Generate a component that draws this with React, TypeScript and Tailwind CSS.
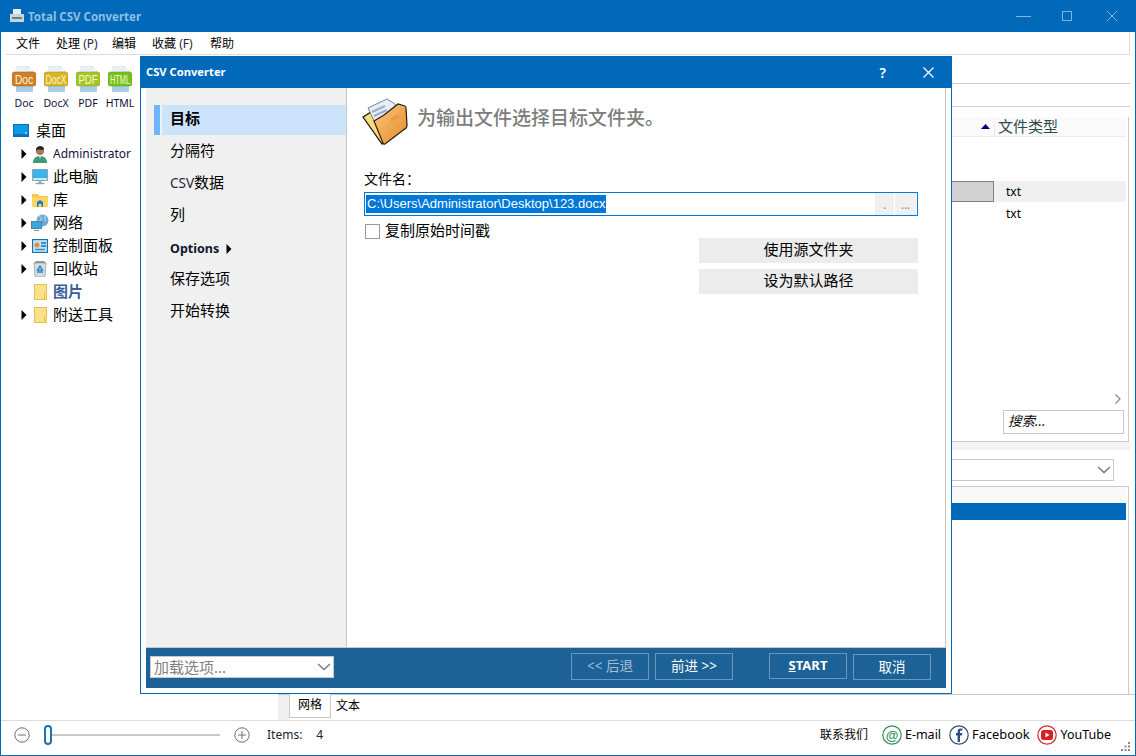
const docIcons = [
  { label: "Doc", band: "#cf7f26", edge: "#a9601a", text: "#fff3dc", sx: 0.85 },
  { label: "DocX", band: "#d8b326", edge: "#b08f12", text: "#fff6c8", sx: 0.72 },
  { label: "PDF", band: "#a5c526", edge: "#83a012", text: "#f5fbd0", sx: 0.8 },
  { label: "HTML", band: "#79c01c", edge: "#5c9c0c", text: "#ecfbd0", sx: 0.62 },
];

function DocIcon({ label, band, edge, text, sx }: { label: string; band: string; edge: string; text: string; sx: number }) {
  return (
    <svg width="24" height="26" viewBox="0 0 24 26">
      <path d="M4 0.5h12l5 5V25a1 1 0 0 1-1 1H5a1 1 0 0 1-1-1z" fill="#a9cde6" />
      <path d="M4 0.5h12l5 5V8H4z" fill="#e9eff4" />
      <path d="M16 0.5l5 5h-5z" fill="#fff" stroke="#c5ccd2" strokeWidth="0.5" />
      <rect x="0" y="6" width="24" height="14" rx="2.5" fill={band} stroke={edge} strokeWidth="0.5" />
      <text transform={`translate(12 17.5) scale(${sx} 1)`} textAnchor="middle" fontSize="12" fill={text} fontFamily="Liberation Sans, sans-serif">
        {label}
      </text>
    </svg>
  );
}

function Caret({ hidden }: { hidden?: boolean }) {
  return (
    <svg width="6" height="10" viewBox="0 0 6 10" className={hidden ? "invisible" : ""}>
      <path d="M0.5 0l5 5-5 5z" fill="#000" />
    </svg>
  );
}

function TreeIcon({ kind }: { kind: string }) {
  if (kind === "desk")
    return (
      <svg width="16" height="13" viewBox="0 0 16 13">
        <rect x="0.5" y="0.5" width="15" height="12" fill="#0c9be8" stroke="#0a6fb8" />
        <path d="M1 11h14" stroke="#0a4f90" />
        <path d="M12 9h2" stroke="#dff" />
      </svg>
    );
  if (kind === "user")
    return (
      <svg width="16" height="18" viewBox="0 0 16 18">
        <path d="M1 18c0-5 3-7 7-7s7 2 7 7z" fill="#3f9a76" />
        <circle cx="8" cy="6" r="4" fill="#a87a58" />
        <path d="M4 6c-1-5 7-7 8-2 0 1-1 1-2 1-2 0-4-1-5 0z" fill="#2d2620" />
        <path d="M7 11h2l-1 3z" fill="#eef" />
      </svg>
    );
  if (kind === "pc")
    return (
      <svg width="16" height="16" viewBox="0 0 16 16">
        <rect x="0.5" y="0.5" width="15" height="11" fill="#38b4ee" stroke="#8fa4b2" />
        <path d="M1 9h14v2H1z" fill="#cfe6f3" />
        <path d="M6.5 12h3v2h-3z" fill="#9fb4c2" />
        <path d="M3.5 14.5h9" stroke="#8fa4b2" strokeWidth="1.4" />
      </svg>
    );
  if (kind === "lib")
    return (
      <svg width="16" height="14" viewBox="0 0 16 14">
        <path d="M0 1h6l1.5 2H16v11H0z" fill="#f6c544" />
        <path d="M0 4h16v10H0z" fill="#fbd465" />
        <path d="M5 14V9l3-2 3 2v5H9.5v-3h-3v3z" fill="#1f7cc4" />
      </svg>
    );
  if (kind === "net")
    return (
      <svg width="18" height="17" viewBox="0 0 18 17">
        <circle cx="11.5" cy="6.5" r="6" fill="#6fa8d6" />
        <path d="M8 2c2 1 3 2 2 4s-3 1-4 1M14 2c0 2-1 3 1 5" stroke="#cfe3f2" fill="none" />
        <rect x="0.5" y="7.5" width="10" height="7" fill="#37a6e4" stroke="#5a7e98" />
        <path d="M3 16.5h5" stroke="#7f95a5" strokeWidth="1.2" />
      </svg>
    );
  if (kind === "panel")
    return (
      <svg width="16" height="14" viewBox="0 0 16 14">
        <rect x="0.5" y="0.5" width="15" height="13" fill="#bfe2f5" stroke="#1a6fb0" strokeWidth="1.2" />
        <circle cx="5" cy="6" r="2.5" fill="#e88f2a" />
        <path d="M9 4h5M9 7h5" stroke="#1a6fb0" strokeWidth="1.4" />
        <path d="M3 10.5h10" stroke="#2a8fc8" strokeWidth="1.4" />
      </svg>
    );
  if (kind === "bin")
    return (
      <svg width="14" height="17" viewBox="0 0 14 17">
        <path d="M1 3h12l-1 14H2z" fill="#d6dde2" stroke="#8c979f" strokeWidth="0.7" />
        <path d="M3 1h8l2 2H1z" fill="#8c979f" />
        <path d="M7 6l2.5 4h-5zM4 12h6" stroke="#2f86cc" strokeWidth="1.4" fill="none" />
      </svg>
    );
  return (
    <svg width="13" height="16" viewBox="0 0 13 16">
      <rect x="0.5" y="0.5" width="12" height="15" fill="#fde08e" stroke="#e5c14d" />
      <path d="M10.5 9v6" stroke="#e5c14d" />
    </svg>
  );
}

const tree = [
  { icon: "user", label: "Administrator", text: "text-[12px] text-[#14143c]" },
  { icon: "pc", label: "此电脑" },
  { icon: "lib", label: "库" },
  { icon: "net", label: "网络" },
  { icon: "panel", label: "控制面板" },
  { icon: "bin", label: "回收站" },
  { icon: "folder", label: "图片", noCaret: true, text: "text-[15px] font-bold text-[#3c5f9c]" },
  { icon: "folder", label: "附送工具" },
];

const navItems = ["目标", "分隔符", "CSV数据", "列", "Options", "保存选项", "开始转换"];

function Chevron({ color = "#777" }: { color?: string }) {
  return (
    <svg width="14" height="8" viewBox="0 0 14 8">
      <path d="M1 1l6 5.5L13 1" stroke={color} strokeWidth="1.3" fill="none" />
    </svg>
  );
}

function FolderArt() {
  return (
    <svg width="46" height="48" viewBox="0 0 46 48">
      <defs>
        <linearGradient id="fold" x1="0" y1="0" x2="1" y2="1">
          <stop offset="0" stopColor="#fcc87c" />
          <stop offset="1" stopColor="#e58a28" />
        </linearGradient>
      </defs>
      <path d="M1 20l8-5 14 29-3 3z" fill="#f7dc7c" stroke="#161616" strokeWidth="1.3" />
      <path d="M6 11L25 2l8 5 2 10-22 9z" fill="#e6edf5" stroke="#5b6672" strokeWidth="0.8" />
      <path d="M10 15l13-6M12 19l13-6" stroke="#9ab0c6" strokeWidth="2" />
      <path d="M12 24l10-6 14-11 7 2c1 0 1 1 1 2l1 17c0 1 0 2-1 3L23 47c-1 .5-2 0-2-1z" fill="url(#fold)" stroke="#2a1c10" strokeWidth="1.2" />
      <path d="M29 21l8-4v4l-8 4z" fill="#e59a44" />
    </svg>
  );
}

function FooterButton({ children, className }: { children: React.ReactNode; className: string }) {
  return <div className={`w-[78px] border border-[#6c97b9] flex items-center justify-center ${className}`}>{children}</div>;
}

export default function App() {
  return (
    <div className="relative w-[1136px] h-[756px] overflow-hidden bg-white flex flex-col border-x border-b border-[#0069ba] font-['Noto_Sans','Noto_Sans_CJK_SC',sans-serif] text-black">
      {/* main window title */}
      <div className="h-8 -mx-px bg-[#0069ba] flex items-center shrink-0">
        <svg width="16" height="16" viewBox="0 0 16 16" className="ml-[9px]">
          <path d="M4 1h8v5H4z" fill="#e6edf2" />
          <path d="M1 6h14v8H1z" fill="#c9d3da" />
          <path d="M3 9h10v2H3z" fill="#5f8c6c" />
        </svg>
        <span className="ml-[3px] pt-px text-[11.5px] font-bold text-[#8ebfe3]">Total CSV Converter</span>
        <div className="ml-auto flex items-center mr-[18px] gap-[32px]">
          <div className="w-[15px] h-px bg-[#7fb4dc]" />
          <div className="w-[10px] h-[10px] border border-[#7fb4dc] -ml-px" />
          <svg width="10" height="10" viewBox="0 0 10 10" className="ml-[3px] mr-px">
            <path d="M0 0l10 10M10 0L0 10" stroke="#7fb4dc" strokeWidth="1" />
          </svg>
        </div>
      </div>

      {/* menu */}
      <div className="h-[23px] ml-[5px] mr-[5px] pt-[2px] border-b border-r border-[#dcdcdc] flex items-center pl-[10px] text-[12px] shrink-0">
        <span className="w-[40px]">文件</span>
        <span className="w-[56px]">处理 <span className="text-[#26263f]">(P)</span></span>
        <span className="w-[40px]">编辑</span>
        <span className="w-[58px]">收藏 <span className="text-[#26263f]">(F)</span></span>
        <span>帮助</span>
      </div>

      <div className="flex-1 flex min-h-0">
        {/* left column */}
        <div className="w-[139px] shrink-0">
          <div className="flex pt-[11px] pl-[11px]">
            {docIcons.map((d) => (
              <div key={d.label} className="w-[32.7px] flex flex-col items-start">
                <DocIcon {...d} />
                <span className="w-[24px] flex justify-center text-[10.5px] leading-[14px] mt-[4px] text-[#10103a] whitespace-nowrap">{d.label}</span>
              </div>
            ))}
          </div>
          <div className="mt-[8px] flex items-center pl-[12px] h-[24px]">
            <TreeIcon kind="desk" />
            <span className="ml-[7px] text-[15px]">桌面</span>
          </div>
          {tree.map((t) => (
            <div key={t.label} className="flex items-center h-[23px] pl-[20px]">
              <Caret hidden={t.noCaret} />
              <div className="w-[20px] ml-[3px] flex justify-center shrink-0">
                <TreeIcon kind={t.icon} />
              </div>
              <span className={`ml-[3px] whitespace-nowrap ${t.text ?? "text-[15px]"}`}>{t.label}</span>
            </div>
          ))}
        </div>

        {/* content behind the dialog */}
        <div className="flex-1 min-w-0 flex flex-col pr-[5px]">
          <div className="h-[29px] border-b border-[#d0d0d0] shrink-0" />
          <div className="h-[23px] border-b border-[#d0d0d0] shrink-0" />
          <div className="mt-[10px] h-[325px] border-r border-b border-[#c8c8c8] mr-px pr-[2px] flex flex-col shrink-0">
            <div className="h-[20px] bg-[#fafafa] border-b border-[#ececec] flex justify-end shrink-0">
              <div className="flex items-center w-[12px] mr-px">
                <svg width="9" height="5" viewBox="0 0 9 5"><path d="M4.5 0L9 5H0z" fill="#000080" /></svg>
              </div>
              <div className="w-[132px] border-l border-[#ececec] pl-[3px] text-[15px] leading-[19px] text-[#2d4a4a]">文件类型</div>
            </div>
            <div className="mt-[44px] h-[21px] bg-[#f0f0f0] flex shrink-0">
              <div className="flex-1 bg-[#d2d2d2] border border-l-0 border-[#808080]" />
              <div className="w-[132px] pl-[12px] text-[12px] leading-[21px]">txt</div>
            </div>
            <div className="h-[24px] flex justify-end shrink-0">
              <div className="w-[132px] pl-[12px] text-[12px] leading-[24px]">txt</div>
            </div>
            <div className="flex-1 flex flex-col items-end pr-[2px] justify-end pb-[7px]">
              <svg width="6" height="10" viewBox="0 0 6 10" className="mb-[6px] mr-[3px]">
                <path d="M0.5 0.5L5 5 0.5 9.5" stroke="#888" fill="none" strokeWidth="1.2" />
              </svg>
              <div className="w-[121px] h-[24px] border border-[#c8c8c8] pl-[4px] text-[13.5px] italic leading-[21px] text-[#111]">搜索...</div>
            </div>
          </div>
          <div className="h-[8px] bg-[#f3f3f3] shrink-0" />
          <div className="mt-[9px] h-[22px] mr-[16px] border border-[#c8c8c8] flex items-center justify-end pr-[2px] shrink-0">
            <Chevron />
          </div>
          <div className="mt-[5px] flex-1 border-t border-r border-[#c8c8c8] mr-px pr-[2px] flex flex-col">
            <div className="h-[16px] bg-[#f9f9f9] shrink-0" />
            <div className="h-[17px] bg-[#0069ba] shrink-0" />
          </div>
          <div className="h-[26px] border-t border-[#c8c8c8] ml-[138px] flex shrink-0 -mr-[5px] relative">
            <div className="w-[11px] bg-[#f0f0f0]" />
            <div className="w-[42px] h-[24px] -mt-px border border-t-0 border-[#c8c8c8] bg-white text-[12px] leading-[22px] text-center">网格</div>
            <div className="ml-[5px] text-[12px] leading-[22px]">文本</div>
          </div>
        </div>
      </div>

      {/* status bar */}
      <div className="h-[35px] pb-[6px] border-t border-[#dcdcdc] flex items-center text-[12px] shrink-0 relative">
        <svg width="16" height="16" viewBox="0 0 16 16" className="ml-[13px]">
          <circle cx="8" cy="8" r="7.2" fill="none" stroke="#6f6f6f" />
          <path d="M4 8h8" stroke="#6f6f6f" />
        </svg>
        <div className="ml-[14px] w-[176px] flex items-center">
          <div className="w-[8px] h-[20px] rounded-full border-2 border-[#1b72b8] bg-white shrink-0" />
          <div className="flex-1 h-[2px] bg-[#c8c8c8]" />
        </div>
        <svg width="16" height="16" viewBox="0 0 16 16" className="ml-[14px]">
          <circle cx="8" cy="8" r="7.2" fill="none" stroke="#6f6f6f" />
          <path d="M4 8h8M8 4v8" stroke="#6f6f6f" />
        </svg>
        <span className="ml-[17px] text-[#1c2233]">Items:</span>
        <span className="ml-[14px] text-[#1c2233]">4</span>
        <span className="ml-auto text-[12px]">联系我们</span>
        <svg width="20" height="20" viewBox="0 0 20 20" className="ml-[14px]">
          <circle cx="10" cy="10" r="9.2" fill="none" stroke="#2f8f55" strokeWidth="1.2" />
          <text x="10" y="14.5" textAnchor="middle" fontSize="13" fontWeight="bold" fill="#2f8f55" fontFamily="Liberation Sans, sans-serif">@</text>
        </svg>
        <span className="ml-[3px] text-[12.5px]">E-mail</span>
        <svg width="20" height="20" viewBox="0 0 20 20" className="ml-[8px]">
          <circle cx="10" cy="10" r="9.2" fill="none" stroke="#2e4f7f" strokeWidth="1.2" />
          <path d="M11 17V10.5h2l.4-2.4H11V6.8c0-.8.3-1.2 1.2-1.2h1.2V3.4h-1.8C9.6 3.4 8.6 4.6 8.6 6.4v1.7H7v2.4h1.6V17z" fill="#2e4f7f" />
        </svg>
        <span className="ml-[3px] text-[12.8px]">Facebook</span>
        <svg width="20" height="20" viewBox="0 0 20 20" className="ml-[8px]">
          <circle cx="10" cy="10" r="9.2" fill="none" stroke="#c62f33" strokeWidth="1.2" />
          <rect x="4" y="5" width="12" height="10" rx="2.5" fill="#d81f26" />
          <path d="M8.5 7.5l4 2.5-4 2.5z" fill="#fff" />
        </svg>
        <span className="ml-[3px] mr-[24px] text-[12.5px]">YouTube</span>
        <svg width="9" height="9" viewBox="0 0 9 9" className="absolute right-[5px] bottom-[4px]">
          <path d="M7 0h2v2H7zM3.500 3.500h2v2h-2zM7 3.500h2v2H7zM0 7h2v2H0zM3.500 7h2v2h-2zM7 7h2v2H7z" fill="#8a8a8a" />
        </svg>
      </div>

      {/* dialog */}
      <div className="absolute left-[139px] top-[56px] w-[812px] h-[638px] bg-white border-x border-b border-[#0069ba] flex flex-col">
        <div className="h-8 -mx-px bg-[#0069ba] flex items-center shrink-0 text-white">
          <span className="ml-[6px] pt-px text-[11.2px] font-bold">CSV Converter</span>
          <span className="ml-auto text-[14px] font-semibold">?</span>
          <svg width="11" height="11" viewBox="0 0 11 11" className="ml-[37px] mr-[18px]">
            <path d="M0.500 0.500l10 10M10.500 0.500l-10 10" stroke="#fff" strokeWidth="1.2" />
          </svg>
        </div>
        <div className="flex-1 min-h-0 flex mx-[5px] border-b border-[#c8c8c8]">
          <div className="w-[201px] shrink-0 bg-[#f0f0f0] pt-[17px] pl-[8px] border-r border-[#c8c8c8]">
            {navItems.map((item, i) => (
              <div key={item} className="h-8 relative">
                {i === 0 && (
                  <div className="flex h-[30px]">
                    <div className="w-[6px] bg-[#6db6fd]" />
                    <div className="ml-[2px] flex-1 bg-[#cce4fb]" />
                  </div>
                )}
                <div className={`absolute left-[16px] leading-[27px] whitespace-nowrap flex items-center ${i === 4 ? "top-[2px]" : "top-0"} ${i === 0 ? "text-[15px] font-bold" : i === 4 ? "text-[12.5px] font-bold text-[#10182c]" : "text-[15px]"}`}>
                  {i === 2 ? <span><span className="text-[13.5px] text-[#26263f]">CSV</span>数据</span> : item}
                  {i === 4 && <span className="ml-[7px]"><Caret /></span>}
                </div>
              </div>
            ))}
          </div>
          <div className="flex-1 border-r border-[#c8c8c8] pl-[17px] pr-[27px]">
            <div className="h-[48px] mt-[9px] -ml-[2px] flex">
              <FolderArt />
              <span className="ml-[9px] mt-[7px] text-[19px] leading-[28px] font-medium text-[#7d7d7d] whitespace-nowrap">为输出文件选择目标文件夹。</span>
            </div>
            <div className="mt-[25px] h-[18px] text-[14px] leading-[18px]">文件名：</div>
            <div className="mt-[4px] h-[24px] border border-[#0078d7] flex items-center pl-px pr-px">
              <span className="h-[18px] px-px bg-[#0078d7] text-white text-[13px] leading-[18px] whitespace-nowrap font-['Liberation_Sans',sans-serif]">C:\Users\Administrator\Desktop\123.docx</span>
              <div className="ml-auto w-[19px] h-[22px] bg-[#f0f0f0] text-[#888] text-[12px] leading-[24px] text-center">.</div>
              <div className="ml-px w-[21px] h-[22px] bg-[#f0f0f0] text-[#888] text-[12px] leading-[24px] text-center">...</div>
            </div>
            <div className="mt-[8px] h-[14px] flex items-center">
              <div className="w-[15px] h-[15px] border border-[#999] shrink-0 ml-px" />
              <span className="ml-[5px] -mt-px text-[15px]">复制原始时间戳</span>
            </div>
            <div className="w-[219px] ml-auto flex flex-col gap-[6px]">
              <div className="h-[25px] bg-[#ececec] text-[15px] leading-[23px] text-center">使用源文件夹</div>
              <div className="h-[25px] bg-[#ececec] text-[15px] leading-[23px] text-center">设为默认路径</div>
            </div>
          </div>
        </div>
        <div className="h-[40px] mx-[5px] mb-[5px] bg-[#1c6296] flex items-start shrink-0 text-white">
          <div className="ml-[4px] mt-[8px] w-[184px] h-[22px] bg-white border border-[#c8c8c8] flex items-center pl-[3px] pr-[2px] text-[15px] leading-[18px] pb-px text-[#808080]">
            加载选项...
            <span className="ml-auto flex"><Chevron /></span>
          </div>
          <FooterButton className="ml-[237px] mt-[5px] h-[27px] text-[13.5px] text-[#a4bfd4]">&lt;&lt; 后退</FooterButton>
          <FooterButton className="ml-[6px] mt-[5px] h-[27px] text-[13.5px]">前进 &gt;&gt;</FooterButton>
          <FooterButton className="ml-[36px] mt-[5px] h-[26px] text-[13px] font-bold">
            <span><span className="underline">S</span>TART</span>
          </FooterButton>
          <FooterButton className="ml-[6px] mt-[6px] h-[26px] text-[13.5px]">取消</FooterButton>
        </div>
      </div>
    </div>
  );
}
